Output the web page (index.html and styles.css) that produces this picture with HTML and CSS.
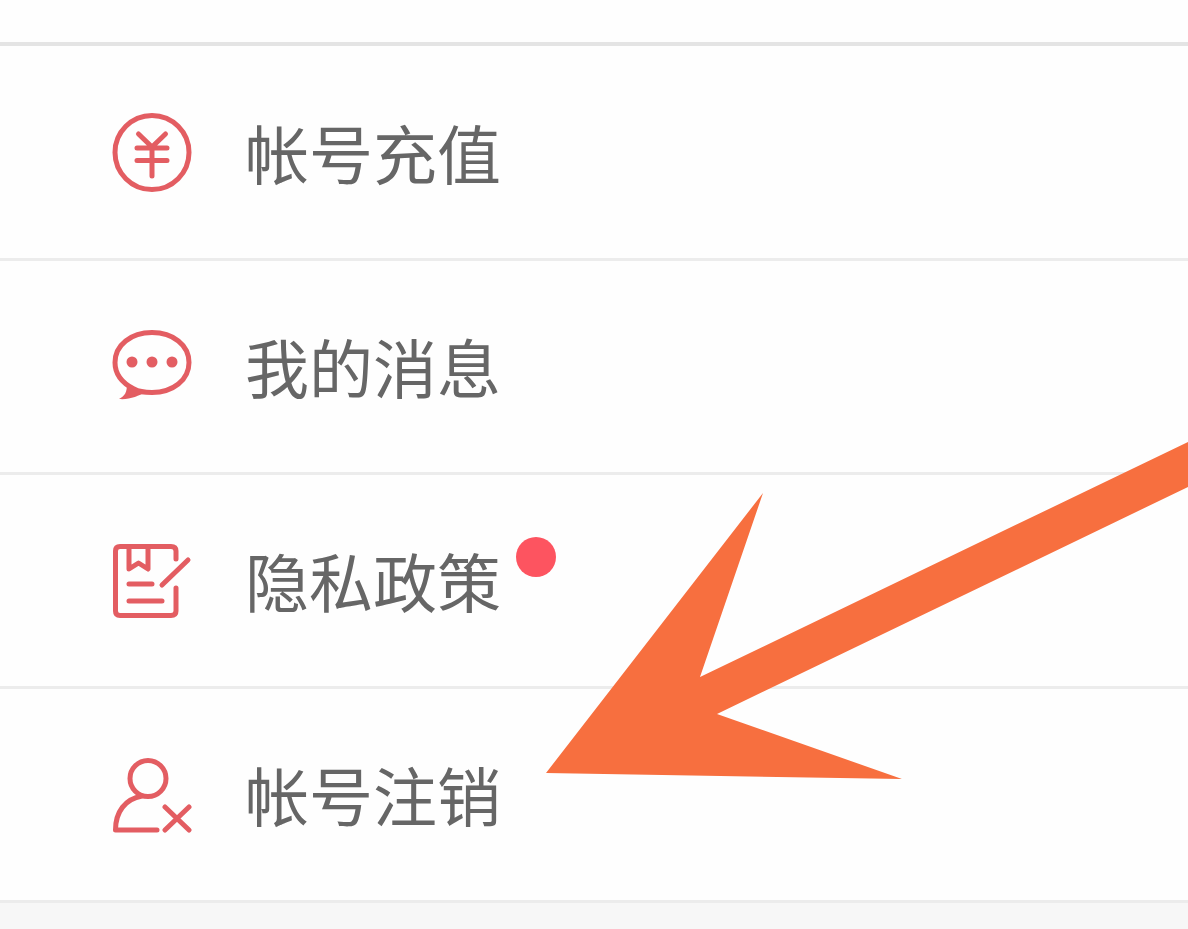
FILE: index.html
```html
<!DOCTYPE html>
<html lang="zh-CN">
<head>
    <meta charset="UTF-8">
    <meta name="viewport" content="width=device-width, initial-scale=1.0">
    <title>帐号</title>
    <link rel="stylesheet" href="styles.css">
</head>
<body>
    <div class="top-bar"></div>

    <!-- Account menu -->
    <ul class="menu">
        <li>
            <a class="menu-item" href="#">
                <svg class="icon" viewBox="0 0 80 80" aria-hidden="true">
                    <circle cx="40" cy="39.500" r="37"/>
                    <path d="M26.500 21 40 34 53.500 21M25 35H55M25 47.500H55M40 34V63"/>
                </svg>
                <span class="label">帐号充值</span>
            </a>
        </li>
        <li>
            <a class="menu-item" href="#">
                <svg class="icon" viewBox="0 0 80 80" aria-hidden="true">
                    <path d="M22 62C10 56 3 47.500 3 35.500 3 18 19 5.500 40 5.500S77 18 77 35.500 61 65.500 40 65.500C34 65.500 27 65 22 62Z"/>
                    <path class="solid" d="M15 57 33 65C27 69 17 73 7 72 13 69 15 65 15 57Z"/>
                    <g class="solid">
                        <circle cx="20" cy="35" r="5.500"/>
                        <circle cx="40" cy="35" r="5.500"/>
                        <circle cx="60" cy="35" r="5.500"/>
                    </g>
                </svg>
                <span class="label">我的消息</span>
            </a>
        </li>
        <li>
            <a class="menu-item" href="#">
                <svg class="icon" viewBox="0 0 80 80" aria-hidden="true">
                    <path d="M64 18V10Q64 5.500 59 5.500H8Q3.500 5.500 3.500 10V70Q3.500 74.500 8 74.500H59Q64 74.500 64 70V47"/>
                    <path d="M17 6V28L26.500 22 36 28V6M17 43H40M17 60H50"/>
                    <path d="M50 44 76 19"/>
                </svg>
                <span class="label">隐私政策</span>
                <span class="dot"></span>
            </a>
        </li>
        <li>
            <a class="menu-item" href="#">
                <svg class="icon" viewBox="0 0 80 80" aria-hidden="true">
                    <circle cx="36" cy="23.500" r="18"/>
                    <path d="M30 41C13 44 3.500 57 3.500 75H45"/>
                    <path d="M53 52 77 75M77 52 53 75"/>
                </svg>
                <span class="label">帐号注销</span>
            </a>
        </li>
    </ul>

    <!-- Pointer to the last item -->
    <svg class="arrow" viewBox="0 0 642 340" aria-hidden="true">
        <path d="M0 333 217 53 154 237 642 2V47L171 274 356 339Z"/>
    </svg>
</body>
</html>
```

FILE: styles.css
```css
body, ul, li {
    margin: 0;
    padding: 0;
    list-style: none;
    box-sizing: border-box;
}

body {
    position: relative;
    min-height: 100vh;
    background-color: #f7f7f7;
    font-family: "Noto Sans CJK SC", sans-serif;
    color: #666;
    overflow-x: hidden;
}

.top-bar {
    height: 42px;
    background-color: #fefefe;
    border-bottom: 4px solid #e4e4e4;
}

.menu {
    padding-top: 1px;
    background-color: #fefefe;
}

.menu li {
    border-bottom: 3px solid #ececec;
}

.menu-item {
    display: flex;
    align-items: center;
    padding: 58px 112px;
    color: inherit;
    text-decoration: none;
}

.icon {
    flex: none;
    width: 80px;
    height: 80px;
    margin-right: 53px;
    fill: none;
    stroke: #e35d62;
    stroke-width: 5;
    stroke-linecap: round;
    stroke-linejoin: round;
}

.icon .solid {
    fill: #e35d62;
    stroke: none;
}

.label {
    padding-bottom: 3px;
    font-size: 64px;
    line-height: 92px;
    white-space: nowrap;
}

.dot {
    align-self: flex-start;
    flex: none;
    width: 40px;
    height: 40px;
    margin: 4px 0 0 15px;
    border-radius: 50%;
    background-color: #fd5460;
}

.arrow {
    position: absolute;
    top: 440px;
    left: 546px;
    width: 642px;
    height: 340px;
    fill: #f76f3f;
}
```
